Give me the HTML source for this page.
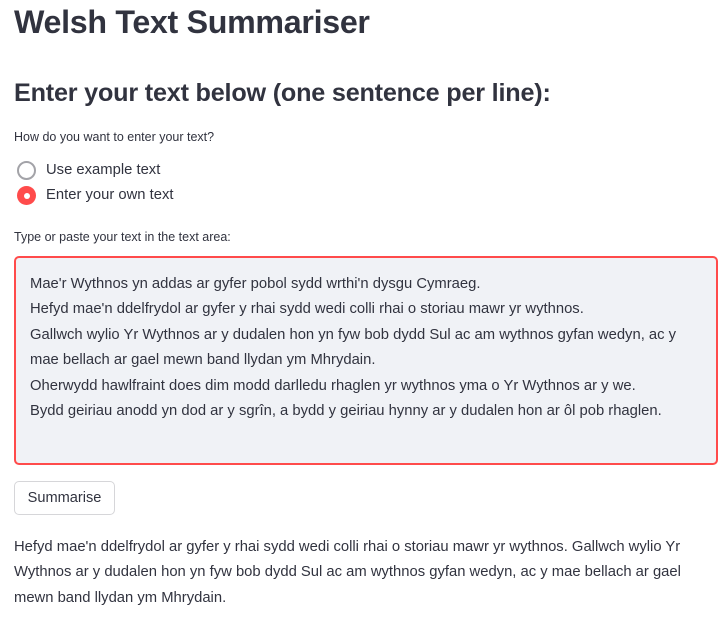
<!DOCTYPE html>
<html><head><style>
body{margin:0;background:#fff;color:#31333f;font-family:"Liberation Sans",sans-serif;width:725px;height:621px;overflow:hidden;position:relative}
.a{position:absolute;white-space:nowrap}
h1{position:absolute;left:14px;top:0;margin:0;font-size:32.2px;font-weight:bold;line-height:44px;letter-spacing:-0.3px}
h2{position:absolute;left:14px;top:75px;margin:0;font-size:25.2px;font-weight:bold;line-height:36px;letter-spacing:-0.2px}
.lbl{font-size:12.5px}
.r{width:19px;height:19px;border-radius:50%;box-sizing:border-box;position:absolute}
.ta{position:absolute;left:14px;top:256px;width:704px;height:209px;box-sizing:border-box;border:2px solid #ff4b4b;border-radius:5px;background:#f0f2f6;padding:14px 14px;font-size:14.8px;line-height:25.4px}
.btn{position:absolute;left:14px;top:481px;width:101px;height:34px;box-sizing:border-box;border:1px solid #d6d6d9;border-radius:5px;font-size:14.6px;text-align:center;line-height:32px}
.out{position:absolute;left:14px;top:535px;width:700px;font-size:14.8px;line-height:25.4px}
</style></head><body>
<h1>Welsh Text Summariser</h1>
<h2>Enter your text below (one sentence per line):</h2>
<div class="a lbl" style="left:14px;top:130px">How do you want to enter your text?</div>
<div class="r" style="left:17px;top:161px;border:2px solid #a3a3a8"></div>
<div class="a" style="left:46px;top:162px;font-size:14.8px">Use example text</div>
<div class="r" style="left:17px;top:186px;background:#ff4b4b"><div style="position:absolute;left:6.5px;top:6.5px;width:6px;height:6px;border-radius:50%;background:#fff"></div></div>
<div class="a" style="left:46px;top:187px;font-size:14.8px">Enter your own text</div>
<div class="a lbl" style="left:14px;top:230px">Type or paste your text in the text area:</div>
<div class="ta">Mae'r Wythnos yn addas ar gyfer pobol sydd wrthi'n dysgu Cymraeg.<br>Hefyd mae'n ddelfrydol ar gyfer y rhai sydd wedi colli rhai o storiau mawr yr wythnos.<br>Gallwch wylio Yr Wythnos ar y dudalen hon yn fyw bob dydd Sul ac am wythnos gyfan wedyn, ac y<br>mae bellach ar gael mewn band llydan ym Mhrydain.<br>Oherwydd hawlfraint does dim modd darlledu rhaglen yr wythnos yma o Yr Wythnos ar y we.<br>Bydd geiriau anodd yn dod ar y sgrîn, a bydd y geiriau hynny ar y dudalen hon ar ôl pob rhaglen.</div>
<div class="btn">Summarise</div>
<div class="out">Hefyd mae'n ddelfrydol ar gyfer y rhai sydd wedi colli rhai o storiau mawr yr wythnos. Gallwch wylio Yr<br>Wythnos ar y dudalen hon yn fyw bob dydd Sul ac am wythnos gyfan wedyn, ac y mae bellach ar gael<br>mewn band llydan ym Mhrydain.</div>
</body></html>
